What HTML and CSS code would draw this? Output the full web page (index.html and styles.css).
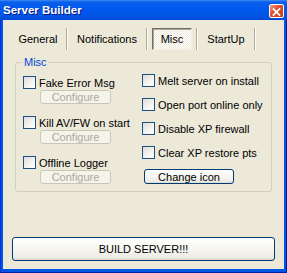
FILE: index.html
```html
<!DOCTYPE html>
<html>
  <head>
    <title>Server Builder</title>
    <meta charset="utf-8" />
    <link rel="stylesheet" href="styles.css">
  </head>
  <body>
    <div class="window">
      <div class="titlebar">
        <span class="title">Server Builder</span>
        <span class="close">
          <svg width="15" height="14" viewBox="0 0 15 14">
            <path d="M4 3.5 L11 10.5 M11 3.5 L4 10.5" stroke="#fff" stroke-width="2" stroke-linecap="square" fill="none"/>
          </svg>
        </span>
      </div>
      <div class="client">
        <div class="tabs">
          <span class="tab">General</span><span class="sep"></span>
          <span class="tab tab-wide">Notifications</span><span class="sep"></span>
          <span class="tab tab-active"><span class="pressed">Misc</span></span><span class="sep"></span>
          <span class="tab">StartUp</span><span class="sep"></span>
        </div>
        <fieldset class="group">
          <legend>Misc</legend>
          <div class="cols">
            <div class="col-left">
              <div class="item">
                <label class="opt"><span class="box"></span>Fake Error Msg</label>
                <button class="cfg" disabled>Configure</button>
              </div>
              <div class="item">
                <label class="opt"><span class="box"></span>Kill AV/FW on start</label>
                <button class="cfg" disabled>Configure</button>
              </div>
              <div class="item">
                <label class="opt"><span class="box"></span>Offline Logger</label>
                <button class="cfg" disabled>Configure</button>
              </div>
            </div>
            <div class="col-right">
              <label class="opt"><span class="box"></span>Melt server on install</label>
              <label class="opt"><span class="box"></span>Open port online only</label>
              <label class="opt"><span class="box"></span>Disable XP firewall</label>
              <label class="opt"><span class="box"></span>Clear XP restore pts</label>
              <button class="btn change">Change icon</button>
            </div>
          </div>
        </fieldset>
        <button class="btn build">BUILD SERVER!!!</button>
      </div>
    </div>
  </body>
</html>
```

FILE: styles.css
```css
body {
  margin: 0;
  background: #fff;
  font-family: 'Liberation Sans', Arial, sans-serif;
  font-size: 11px;
  color: #000;
}
.window {
  width: 287px;
  height: 273px;
  box-sizing: border-box;
  display: flex;
  flex-direction: column;
  background: #0055e5;
  padding: 0 3px 4px 3px;
  box-shadow: inset 1px 0 #0831d9, inset -1px 0 #001ea0, inset 0 -1px #001ea0;
}
.titlebar {
  height: 20px;
  margin: 0 -3px;
  padding: 0 3px 0 3px;
  display: flex;
  align-items: center;
  justify-content: space-between;
  background: linear-gradient(to bottom, #3d8cf5 0, #0a5fea 2px, #0058ee 40%, #0055e5 80%, #004ad6 100%);
}
.title {
  color: #fff;
  font-weight: bold;
  font-size: 11.5px;
  text-shadow: 1px 1px #0a1883;
}
.close {
  width: 15px;
  height: 14px;
  box-sizing: border-box;
  border: 1px solid #fff;
  border-radius: 2px;
  background: linear-gradient(135deg, #f09c85 0, #e0522f 40%, #c63a14 100%);
  display: flex;
  margin-top: 1px;
}
.client {
  flex: 1;
  background: #ece9d8;
  display: flex;
  flex-direction: column;
}
.tabs {
  display: flex;
  height: 22px;
  margin-top: 8px;
  padding-left: 7px;
}
.tab {
  width: 56px;
  display: flex;
  align-items: center;
  justify-content: center;
}
.tab-wide {
  width: 78px;
}
.tab-active {
  width: 48px;
}
.tab:last-of-type {
  width: 57px;
}
.pressed {
  flex: 1;
  height: 100%;
  margin: 0 4px;
  box-sizing: border-box;
  display: flex;
  align-items: center;
  justify-content: center;
  border: 1px solid;
  border-color: #716f64 #f1efe2 #f1efe2 #716f64;
  box-shadow: inset 1px 1px #aca899;
  background: repeating-conic-gradient(#fff 0 25%, #ece9d8 0 50%) 0 0 / 2px 2px;
}
.sep {
  width: 0;
  height: 22px;
  border-left: 1px solid #aca899;
  border-right: 1px solid #fff;
}
.group {
  margin: 6px 12px 0 12px;
  padding: 0 0 7px 7px;
  border: 1px solid #d0d0bf;
  border-radius: 3px;
}
.group legend {
  color: #0046d5;
  padding: 0 1px;
  line-height: 13px;
}
.cols {
  display: flex;
  padding-top: 4px;
}
.col-left {
  width: 119px;
  padding-top: 2px;
  display: flex;
  flex-direction: column;
  gap: 11px;
}
.item {
  display: flex;
  flex-direction: column;
}
.col-right {
  display: flex;
  flex-direction: column;
  gap: 9px;
}
.opt {
  height: 15px;
  display: flex;
  align-items: center;
  gap: 3px;
  white-space: nowrap;
}
.box {
  width: 13px;
  height: 13px;
  box-sizing: border-box;
  border: 1px solid #1c5180;
  background: linear-gradient(135deg, #dcdcd7 0, #f4f4f1 60%, #fff 100%);
}
.cfg {
  width: 71px;
  height: 14px;
  margin-left: 17px;
  padding: 0;
  font: inherit;
  color: #aca899;
  background: #f5f4ea;
  border: 1px solid #c9c7ba;
  border-radius: 3px;
}
.btn {
  padding: 0;
  font: inherit;
  color: #000;
  border: 1px solid #003c74;
  border-radius: 3px;
  background: linear-gradient(to bottom, #fff 0, #f6f5f0 50%, #ecebe6 90%, #d6d0c5 100%);
}
.change {
  width: 90px;
  height: 15px;
  margin-left: 2px;
}
.build {
  height: 24px;
  margin: auto 9px 8px 9px;
}
```
